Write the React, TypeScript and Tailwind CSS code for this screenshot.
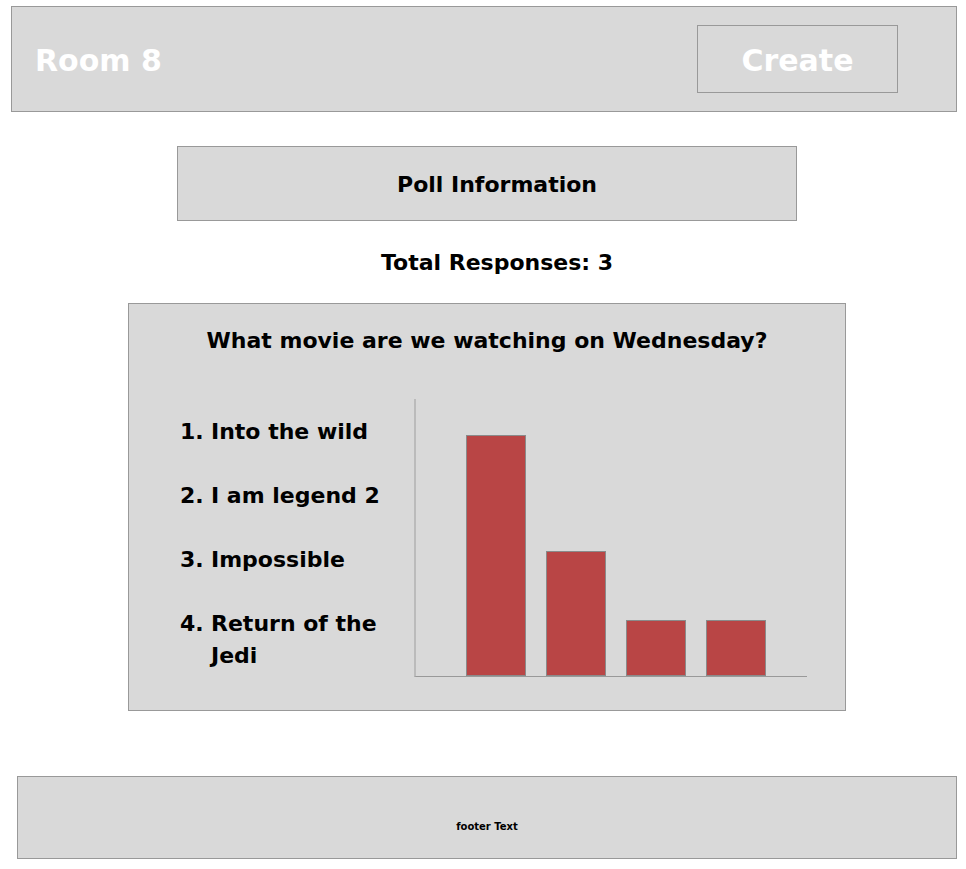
const options = [
  { n: "1.", label: "Into the wild" },
  { n: "2.", label: "I am legend 2" },
  { n: "3.", label: "Impossible" },
  { n: "4.", label: "Return of the Jedi" },
];

const bars = [241, 125, 56, 56];

function App() {
  return (
    <div className="w-[966px] min-h-[869px] bg-white font-['DejaVu_Sans',sans-serif] font-bold text-black">
      {/* Header */}
      <header className="mt-[6px] ml-[11px] w-[946px] h-[106px] border border-[#999] bg-[#d9d9d9] flex items-center justify-between">
        <h1 className="ml-[23px] pt-[4px] text-[30px] leading-[36px] text-white">Room 8</h1>
        <button className="mr-[58px] w-[201px] h-[68px] border border-[#999] pt-[3px] text-[30px] leading-[36px] text-white">
          Create
        </button>
      </header>

      <main className="ml-[17px] w-[940px] flex flex-col items-center">
        {/* Poll info */}
        <div className="mt-[34px] w-[620px] h-[75px] border border-[#999] bg-[#d9d9d9] flex items-center justify-center pl-[20px]">
          <h2 className="text-[22px] leading-[26px] pt-[3px]">Poll Information</h2>
        </div>

        <p className="mt-[29px] pl-[20px] text-[22px] leading-[26px]">Total Responses: 3</p>

        {/* Poll card */}
        <section className="mt-[27px] w-[718px] h-[408px] border border-[#999] bg-[#d9d9d9]">
          <h3 className="pt-[24px] text-center text-[22px] leading-[26px]">
            What movie are we watching on Wednesday?
          </h3>

          <div className="flex items-start">
            <ol className="mt-[62px] ml-[51px] w-[234px] flex flex-col gap-[32px] text-[22px] leading-[32px]">
              {options.map((o) => (
                <li key={o.n} className="flex">
                  <span className="w-[31px] shrink-0">{o.n}</span>
                  <span className="w-[180px]">{o.label}</span>
                </li>
              ))}
            </ol>

            {/* Chart */}
            <div className="mt-[45px] w-[393px] h-[278px] border-l-2 border-b border-l-[#bbb] border-b-[#999] flex items-end gap-[20px] pl-[50px]">
              {bars.map((h, i) => (
                <div
                  key={i}
                  className="w-[60px] border border-[#8a8a8a] bg-[#b94545]"
                  style={{ height: h }}
                />
              ))}
            </div>
          </div>
        </section>

        {/* Footer */}
        <footer className="mt-[65px] w-[940px] h-[83px] border border-[#999] bg-[#d9d9d9] pt-[36px] text-center">
          <span className="text-[10px] leading-[12px]">footer Text</span>
        </footer>
      </main>
    </div>
  );
}

export default App;
